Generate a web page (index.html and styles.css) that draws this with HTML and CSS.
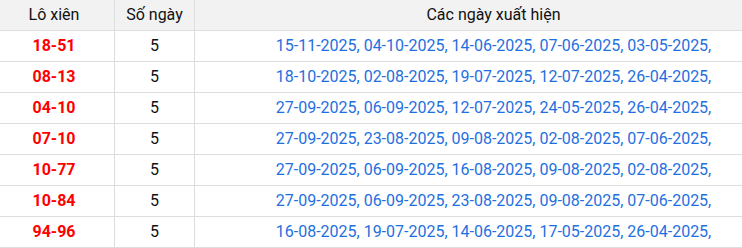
FILE: index.html
```html
<!DOCTYPE html>
<html lang="vi">
<head>
<meta charset="utf-8">
<link rel="stylesheet" href="styles.css">
</head>
<body>
<div class="viewport">
<table class="stats">
  <thead>
    <tr><th class="c1">Lô xiên</th><th class="c2">Số ngày</th><th class="c3">Các ngày xuất hiện</th></tr>
  </thead>
  <tbody>
    <tr><td class="pair">18-51</td><td>5</td><td class="dates">15-11-2025, 04-10-2025, 14-06-2025, 07-06-2025, 03-05-2025,</td></tr>
    <tr><td class="pair">08-13</td><td>5</td><td class="dates">18-10-2025, 02-08-2025, 19-07-2025, 12-07-2025, 26-04-2025,</td></tr>
    <tr><td class="pair">04-10</td><td>5</td><td class="dates">27-09-2025, 06-09-2025, 12-07-2025, 24-05-2025, 26-04-2025,</td></tr>
    <tr><td class="pair">07-10</td><td>5</td><td class="dates">27-09-2025, 23-08-2025, 09-08-2025, 02-08-2025, 07-06-2025,</td></tr>
    <tr><td class="pair">10-77</td><td>5</td><td class="dates">27-09-2025, 06-09-2025, 16-08-2025, 09-08-2025, 02-08-2025,</td></tr>
    <tr><td class="pair">10-84</td><td>5</td><td class="dates">27-09-2025, 06-09-2025, 23-08-2025, 09-08-2025, 07-06-2025,</td></tr>
    <tr><td class="pair">94-96</td><td>5</td><td class="dates">16-08-2025, 19-07-2025, 14-06-2025, 17-05-2025, 26-04-2025,</td></tr>
  </tbody>
</table>
</div>
</body>
</html>
```
FILE: styles.css
```css
html, body {
  margin: 0;
  padding: 0;
  background: #fff;
}
.viewport {
  width: 742px;
  height: 248px;
  overflow: hidden;
}
.stats {
  margin-left: -7px;
  width: 800px;
  border-collapse: collapse;
  table-layout: fixed;
  font-family: Roboto, "Liberation Sans", sans-serif;
  font-size: 16px;
  color: #111;
}
.stats th, .stats td {
  border: 1px solid #dedede;
  text-align: center;
  padding: 0;
  white-space: nowrap;
}
.stats thead th {
  border-top: none;
  background: #f2f2f2;
  font-weight: normal;
  height: 30px;
  line-height: 30px;
}
.stats td {
  height: 30px;
  line-height: 30px;
}
.c1 { width: 120px; }
.c2 { width: 79px; }
.pair {
  color: #ff0000;
  font-weight: bold;
}
.dates {
  color: #1f6fe0;
}
```
